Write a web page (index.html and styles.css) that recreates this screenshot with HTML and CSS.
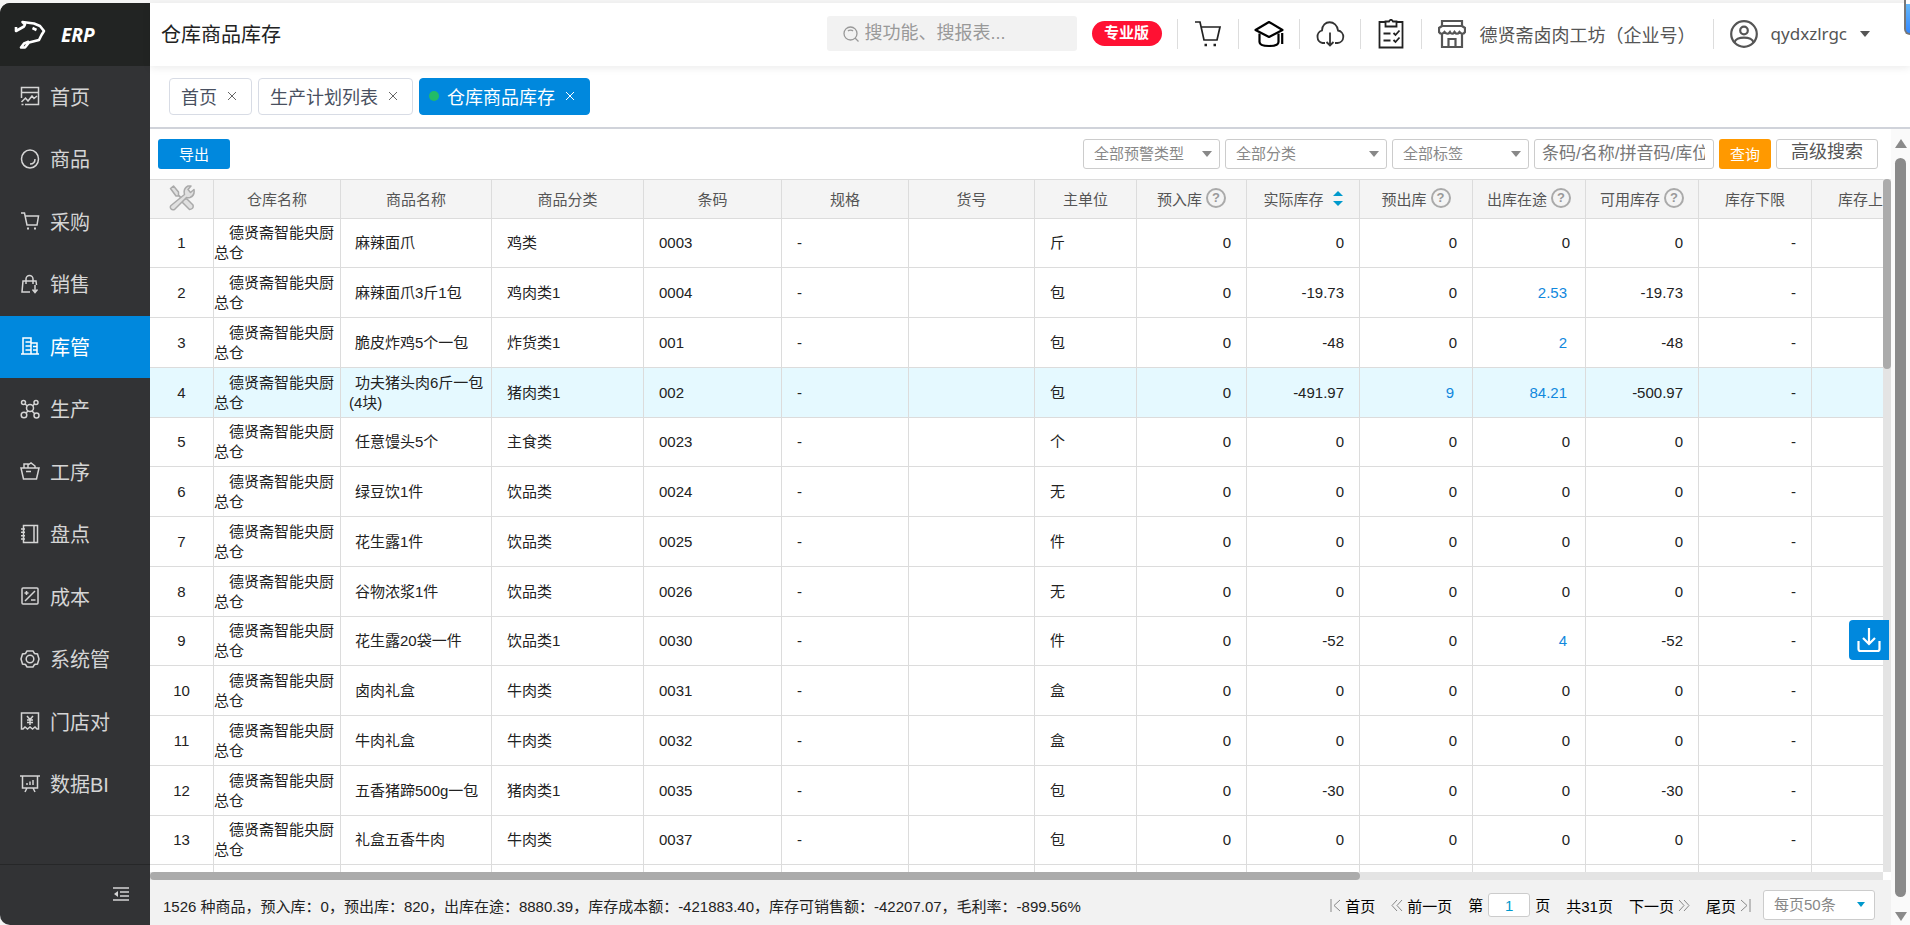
FILE: index.html
```
<!DOCTYPE html>
<html lang="zh-CN">
<head>
    <meta charset="UTF-8">
    <meta name="viewport" content="width=device-width, initial-scale=1.0">
    <title>仓库商品库存</title>
    <link rel="stylesheet" href="styles.css">
</head>
<body>
    <aside class="sidebar">
        <div class="logo">
            <svg width="32" height="32" viewBox="0 0 32 32" fill="none" stroke="#fff" stroke-width="2.600" stroke-linejoin="round"><path d="M2 8v4l8-4.500 1-2L8.500 3 20 4.500l6 2.500 4 5-2.500 4L25 21l-10 2.500-4 5H7l3-4 5-2M18.500 9l4 2" /></svg>
            <span>ERP</span>
        </div>
        <nav class="menu">
            <a href="#"><svg viewBox="0 0 20 20"><path d="M1.500 12V1.500h17v17H5M1.500 6.500h17M1.500 16l4-4 2.500 3 4-5 2 2.500 3-2.500M1.500 18.500h2" /></svg>首页</a>
            <a href="#"><svg viewBox="0 0 20 20"><ellipse cx="10" cy="10" rx="8.500" ry="9" /><path d="M15 10c0 3-2 5-5 5" /></svg>商品</a>
            <a href="#"><svg viewBox="0 0 20 20"><path d="M1 2h3.500l2.500 12h10l1.500-9H5.500" /><path d="M7 17.500h2M14 17.500h2" stroke-width="2" /></svg>采购</a>
            <a href="#"><svg viewBox="0 0 20 20"><path d="M10 18H2l1-11h13l.5 4M6 10V5a3.500 3.500 0 0 1 7 0v5M15 11v7M12.500 15.500l2.500 3 2.500-3" /></svg>销售</a>
            <a href="#" class="active"><svg viewBox="0 0 20 20"><path d="M1 18h18M3 18V2h8v16M11 7h6v11M5.500 6H11M5.500 10H11M5.500 14H11M13 10.500h4M13 14h4" /></svg>库管</a>
            <a href="#"><svg viewBox="0 0 20 20"><circle cx="3.500" cy="3.500" r="2" /><circle cx="16" cy="3.500" r="2" /><circle cx="10" cy="9" r="3.500" /><circle cx="4" cy="16" r="2.800" /><circle cx="16.500" cy="16.500" r="2.500" /><path d="M5 5l2.500 2M14.500 5l-2 2M8 12l-2 2M12 12l2.500 2.500" /></svg>生产</a>
            <a href="#"><svg viewBox="0 0 20 20"><path d="M1 7h18l-2.500 11h-13L1 7zM4 7V3h4v4M8 4l3-2 4 3v2M6 10.500h5" /></svg>工序</a>
            <a href="#"><svg viewBox="0 0 20 20"><path d="M3.500 1.500h14v17h-14zM14 1.500v17M1 5h4M1 8.300h4M1 11.700h4M1 15h4" /></svg>盘点</a>
            <a href="#"><svg viewBox="0 0 20 20"><rect x="2" y="2" width="16" height="16" rx="1" /><path d="M5 15L15 5M4.500 7h4M6.500 5v4M11 14h4.500" /></svg>成本</a>
            <a href="#"><svg viewBox="0 0 20 20"><path d="M7 2h6l1.500 2.500 3 .5 1.500 5-1.500 5-3 .5L13 18H7l-1.500-2.500-3-.5L1 10l1.500-5 3-.5z" /><circle cx="10" cy="10" r="3.800" /></svg>系统管</a>
            <a href="#"><svg viewBox="0 0 20 20"><path d="M3 18H1.500V2h17v16H17l-2-2-2.500 2-2.500-2-2.500 2L5 16zM7 5l3 3.500L13 5M10 8.500V14M7 9h6M7 11.500h6" /></svg>门店对</a>
            <a href="#"><svg viewBox="0 0 20 20"><path d="M0 2h20M2.500 2v12h15V2M7 14l-2 4M13 14l2 4M7 11V9M10 11V7.500M13 11V6" /></svg>数据BI</a>
        </nav>
        <button class="collapse" aria-label="收起菜单">
            <svg width="16" height="14" viewBox="0 0 16 14" stroke="#d5d5d5" stroke-width="1.500"><path d="M0 1h16M7 5h9M7 9h9M0 13h16" /><path d="M5 4v6L1 7z" fill="#d5d5d5" stroke="none" /></svg>
        </button>
    </aside>

    <main class="main">
        <header class="header">
            <h1>仓库商品库存</h1>
            <div class="search">
                <svg width="16" height="16" viewBox="0 0 16 16" fill="none" stroke="#999" stroke-width="1.300"><circle cx="7.500" cy="7.500" r="6.500" /><path d="M12 12l3.500 3.500M5 5c1-1.300 4-1.300 5 0" /></svg>
                <input type="text" placeholder="搜功能、搜报表..." aria-label="搜索">
            </div>
            <span class="badge">专业版</span>
            <a href="#" class="icon-link" aria-label="购物车"><svg width="28" height="28" viewBox="0 0 28 28" fill="none" stroke="#222" stroke-width="1.700"><path d="M1 2h5l4 18h13l3-13H7.500" /><path d="M10.500 25h2.500M19.500 25h2.500" stroke-width="2.500" /></svg></a>
            <a href="#" class="icon-link" aria-label="学院"><svg width="30" height="28" viewBox="0 0 30 28" fill="none" stroke="#000" stroke-width="2.200" stroke-linejoin="round"><path d="M1.500 10L15 2l13.500 8L15 17z" /><path d="M5.500 13.500V22q0 4 9.500 4t9.500-4v-8.500M28.200 13v11" /></svg></a>
            <a href="#" class="icon-link" aria-label="下载"><svg width="30" height="28" viewBox="0 0 30 28" fill="none" stroke="#333" stroke-width="1.800"><path d="M10 23H7.500a6.500 6.500 0 0 1-.5-12.500c0-11 15-11 16 0a6.300 6.300 0 0 1-.5 12.500H20M15 12.500v13M11.500 22l3.500 3.500 3.500-3.500" /></svg></a>
            <a href="#" class="icon-link" aria-label="任务"><svg width="26" height="30" viewBox="0 0 26 30" fill="none" stroke="#222" stroke-width="1.800"><path d="M7 3H1.500v25.500h23V3H19M7.500 2.500H11Q13-1 15 2.500h3.500v5h-11zM5.500 14.500h7M5.500 21.500h7M15.500 14l2 2 4-4.500M15.500 21l2 2 4-4.500" /></svg></a>
            <a href="#" class="company">
                <svg width="28" height="28" viewBox="0 0 28 28" fill="none" stroke="#555" stroke-width="2.200"><path d="M4 1h20v5H4zM4 6L1 8v4q2.500 3.500 5.500 0 3 3.500 5.500 0 2 3.500 4.500 0 2.500 3.500 5 0 3 3.500 5.500 0V8l-3-2M4 14v13h20V14M10.500 27v-8h7v8" /></svg>
                德贤斋卤肉工坊（企业号）
            </a>
            <a href="#" class="user">
                <svg width="28" height="28" viewBox="0 0 28 28" fill="none" stroke="#555" stroke-width="2.200"><circle cx="14" cy="14" r="12.800" /><circle cx="14" cy="10.500" r="3.800" /><path d="M4.500 22.500c1-6.500 18-6.500 19 0" /></svg>
                <span>qydxzlrgc</span>
                <i class="caret"></i>
            </a>
        </header>

        <div class="tabs">
            <div class="tab"><a href="#">首页</a><button aria-label="关闭"><svg viewBox="0 0 10 10"><path d="M1 1l8 8M9 1L1 9" /></svg></button></div>
            <div class="tab"><a href="#">生产计划列表</a><button aria-label="关闭"><svg viewBox="0 0 10 10"><path d="M1 1l8 8M9 1L1 9" /></svg></button></div>
            <div class="tab active"><i class="dot"></i><a href="#">仓库商品库存</a><button aria-label="关闭"><svg viewBox="0 0 10 10"><path d="M1 1l8 8M9 1L1 9" /></svg></button></div>
        </div>

        <div class="page">
            <section class="content">
                <div class="toolbar">
                    <button class="btn export">导出</button>
                    <div class="select"><select aria-label="预警类型"><option>全部预警类型</option></select></div>
                    <div class="select wide"><select aria-label="分类"><option>全部分类</option></select></div>
                    <div class="select"><select aria-label="标签"><option>全部标签</option></select></div>
                    <input type="text" class="keyword" placeholder="条码/名称/拼音码/库位" aria-label="关键字">
                    <button class="btn query">查询</button>
                    <button class="btn advanced">高级搜索</button>
                </div>

                <div class="grid">
                    <div class="table-wrap">
                        <table>
                            <colgroup>
                                <col class="c-no"><col class="c-store"><col class="c-name"><col class="c-cate"><col class="c-code"><col class="c-spec"><col class="c-item"><col class="c-unit"><col class="c-in"><col class="c-num"><col class="c-num"><col class="c-num"><col class="c-num"><col class="c-num"><col class="c-num">
                            </colgroup>
                            <thead>
                                <tr>
                                    <th><svg class="tools" width="26" height="26" viewBox="0 0 26 26" fill="#e0e0e0" stroke="#aaa" stroke-width="1.500" stroke-linejoin="round"><path d="M1.500 3.500l3-2.500 5 6v3l3 3 2.500 1h3l6 6q1 4-3.500 4.500l-7-7v-3L10 11H7z" /><path d="M15.500 9.500q-1.500-6 3.500-8.500h3l-3 3.500 2.500 3L25 4.500q1 6-4 8-2 .5-3.500 0l-12 12q-3 1-4-1.500-.5-1.500.5-2.500z" /></svg></th>
                                    <th>仓库名称</th>
                                    <th>商品名称</th>
                                    <th>商品分类</th>
                                    <th>条码</th>
                                    <th>规格</th>
                                    <th>货号</th>
                                    <th>主单位</th>
                                    <th><div class="th">预入库<i class="help">?</i></div></th>
                                    <th><div class="th">实际库存<i class="sort"></i></div></th>
                                    <th><div class="th">预出库<i class="help">?</i></div></th>
                                    <th><div class="th">出库在途<i class="help">?</i></div></th>
                                    <th><div class="th">可用库存<i class="help">?</i></div></th>
                                    <th>库存下限</th>
                                    <th>库存上限</th>
                                </tr>
                            </thead>
                            <tbody id="rows"></tbody>
                        </table>
                    </div>
                    <div class="vbar"><i></i></div>
                    <div class="hbar"><i></i></div>
                </div>

                <footer class="footer">
                    <p>1526 种商品，预入库：0，预出库：820，出库在途：8880.39，库存成本额：-421883.40，库存可销售额：-42207.07，毛利率：-899.56%</p>
                    <div class="pager">
                        <a href="#"><svg width="11" height="13" viewBox="0 0 11 13"><path d="M1 0v13M10 1L4 6.500l6 5.500" /></svg>首页</a>
                        <a href="#"><svg width="12" height="13" viewBox="0 0 12 13"><path d="M6 1L1 6.500 6 12M11 1L6 6.500l5 5.500" /></svg>前一页</a>
                        <label>第<input type="text" value="1">页</label>
                        <span>共31页</span>
                        <a href="#">下一页<svg width="12" height="13" viewBox="0 0 12 13"><path d="M1 1l5 5.500L1 12M6 1l5 5.500L6 12" /></svg></a>
                        <a href="#">尾页<svg width="11" height="13" viewBox="0 0 11 13"><path d="M10 0v13M1 1l6 5.500L1 12" /></svg></a>
                        <div class="select size"><select aria-label="每页条数"><option>每页50条</option></select></div>
                    </div>
                </footer>

                <button class="download" aria-label="下载"><svg width="24" height="26" viewBox="0 0 24 26" fill="none" stroke="#fff" stroke-width="2.200"><path d="M12 1v16M6 11l6 6 6-6M1.500 14v8q0 2 2 2h17q2 0 2-2v-8" /></svg></button>
            </section>
            <div class="scroll"><i class="up"></i><i class="thumb"></i><i class="down"></i></div>
        </div>
    </main>
    <div class="float-window"></div>

    <script>
        // 商品名称, 分类, 条码, 单位, 实际库存, 预出库, 出库在途, 可用库存
        var goods = [
            ['麻辣面爪', '鸡类', '0003', '斤', '0', '0', '0', '0'],
            ['麻辣面爪3斤1包', '鸡肉类1', '0004', '包', '-19.73', '0', '2.53', '-19.73'],
            ['脆皮炸鸡5个一包', '炸货类1', '001', '包', '-48', '0', '2', '-48'],
            ['功夫猪头肉6斤一包(4块)', '猪肉类1', '002', '包', '-491.97', '9', '84.21', '-500.97'],
            ['任意馒头5个', '主食类', '0023', '个', '0', '0', '0', '0'],
            ['绿豆饮1件', '饮品类', '0024', '无', '0', '0', '0', '0'],
            ['花生露1件', '饮品类', '0025', '件', '0', '0', '0', '0'],
            ['谷物浓浆1件', '饮品类', '0026', '无', '0', '0', '0', '0'],
            ['花生露20袋一件', '饮品类1', '0030', '件', '-52', '0', '4', '-52'],
            ['卤肉礼盒', '牛肉类', '0031', '盒', '0', '0', '0', '0'],
            ['牛肉礼盒', '牛肉类', '0032', '盒', '0', '0', '0', '0'],
            ['五香猪蹄500g一包', '猪肉类1', '0035', '包', '-30', '0', '0', '-30'],
            ['礼盒五香牛肉', '牛肉类', '0037', '包', '0', '0', '0', '0']
        ];

        function linkCell(value) {
            return value === '0' ? '0' : '<a href="#">' + value + '</a>';
        }

        var html = '';
        for (var i = 0; i < goods.length; i++) {
            var g = goods[i];
            html += '<tr' + (i === 3 ? ' class="selected"' : '') + '>' +
                '<td class="no">' + (i + 1) + '</td>' +
                '<td class="store">德贤斋智能央厨总仓</td>' +
                '<td class="name">' + g[0] + '</td>' +
                '<td>' + g[1] + '</td><td>' + g[2] + '</td><td>-</td><td></td><td>' + g[3] + '</td>' +
                '<td class="num">0</td>' +
                '<td class="num">' + g[4] + '</td>' +
                '<td class="num">' + linkCell(g[5]) + '</td>' +
                '<td class="num">' + linkCell(g[6]) + '</td>' +
                '<td class="num">' + g[7] + '</td>' +
                '<td class="num">-</td><td></td></tr>';
        }
        html += '<tr>' + '<td></td>'.repeat(15) + '</tr>';
        document.getElementById('rows').innerHTML = html;
    </script>
</body>
</html>
```
FILE: styles.css
```
* {
    box-sizing: border-box;
}

body {
    margin: 0;
    padding-top: 3px;
    height: 100vh;
    display: flex;
    overflow: hidden;
    background-color: #f5f5f5;
    font-family: "Liberation Sans", "Noto Sans CJK SC", sans-serif;
    font-size: 15px;
    color: #222;
}

a {
    color: inherit;
    text-decoration: none;
}

button,
input,
select {
    font-family: inherit;
    font-size: 15px;
    margin: 0;
}

button {
    border: none;
    padding: 0;
    background: none;
    cursor: pointer;
}

svg {
    flex: none;
}

/* sidebar */
.sidebar {
    width: 150px;
    flex: none;
    display: flex;
    flex-direction: column;
    background-color: #323335;
    border-radius: 10px 0 0 10px;
    overflow: hidden;
}

.logo {
    height: 63px;
    flex: none;
    display: flex;
    align-items: center;
    gap: 15px;
    padding-left: 14px;
    background-color: #222423;
    color: #fff;
    font-family: "Noto Sans", sans-serif;
    font-size: 19px;
    font-weight: bold;
    font-style: italic;
}

.menu {
    flex: 1;
}

.menu a {
    height: 62px;
    display: flex;
    align-items: center;
    gap: 10px;
    padding: 0 0 2px 20px;
    color: #d5d5d5;
    font-size: 20px;
}

.menu a:nth-child(even) {
    height: 63px;
}

.menu a.active {
    background-color: #0088dd;
    color: #fff;
}

.menu svg {
    width: 20px;
    height: 20px;
    fill: none;
    stroke: currentColor;
    stroke-width: 1.5;
}

.collapse {
    height: 61px;
    flex: none;
    border-top: 1px solid #262728;
    padding-right: 21px;
    text-align: right;
}

/* header */
.main {
    flex: 1;
    min-width: 0;
    display: flex;
    flex-direction: column;
    background-color: #fff;
}

.header {
    height: 63px;
    flex: none;
    display: flex;
    align-items: center;
    padding: 0 40px 2px 11px;
    box-shadow: 0 2px 8px rgba(0, 0, 0, 0.08);
    color: #555;
}

.header h1 {
    margin: 0 auto 0 0;
    font-size: 20px;
    font-weight: normal;
    color: #222;
}

.search {
    width: 250px;
    height: 35px;
    margin-right: 15px;
    display: flex;
    align-items: center;
    gap: 6px;
    padding-left: 16px;
    background-color: #f2f2f2;
    border-radius: 3px;
}

.search input {
    flex: 1;
    min-width: 0;
    border: none;
    padding: 0;
    background: none;
    font-size: 18px;
    outline: none;
}

::placeholder {
    color: #999;
}

.badge {
    width: 70px;
    height: 25px;
    line-height: 24px;
    margin-right: 15px;
    border-radius: 13px;
    background-color: #ff1133;
    color: #fff;
    font-weight: bold;
    text-align: center;
}

.icon-link,
.company,
.user {
    height: 30px;
    display: flex;
    align-items: center;
    border-left: 1px solid #ddd;
}

.icon-link {
    width: 61px;
    justify-content: center;
}

.company {
    width: 292px;
    padding-left: 16px;
    gap: 14px;
    font-size: 18px;
    white-space: nowrap;
}

.user {
    padding-left: 16px;
    gap: 13px;
    font-family: "Noto Sans", sans-serif;
    font-size: 17px;
}

.caret {
    border: 5px solid transparent;
    border-top: 6px solid #555;
    border-bottom: none;
}

/* tabs */
.tabs {
    height: 63px;
    flex: none;
    display: flex;
    gap: 6px;
    padding: 12px 19px;
    border-bottom: 2px solid #d0d3da;
}

.tab {
    height: 37px;
    display: flex;
    align-items: center;
    gap: 10px;
    padding: 0 14px 2px 11px;
    border: 1px solid #d8dce5;
    border-radius: 4px;
    font-size: 18px;
    color: #495060;
}

.tab button {
    display: flex;
}

.tab svg {
    width: 10px;
    height: 10px;
    stroke: #666;
}

.tab.active {
    background-color: #0088dd;
    border-color: #0088dd;
    color: #fff;
    padding-left: 9px;
}

.tab.active svg {
    stroke: #fff;
}

.dot {
    width: 10px;
    height: 10px;
    margin-right: -2px;
    border-radius: 50%;
    background-color: #22bb66;
}

/* page */
.page {
    flex: 1;
    min-height: 0;
    display: flex;
}

.content {
    position: relative;
    flex: 1;
    min-width: 0;
    display: flex;
    flex-direction: column;
}

.toolbar {
    height: 50px;
    flex: none;
    display: flex;
    gap: 5px;
    padding: 10px 13px 10px 8px;
}

.btn {
    height: 30px;
    border-radius: 3px;
    padding-bottom: 2px;
    color: #fff;
}

.export {
    width: 72px;
    margin-right: auto;
    background-color: #0088dd;
}

.query {
    width: 52px;
    background-color: #ff9900;
}

.advanced {
    width: 102px;
    border: 1px solid #ccc;
    padding-bottom: 4px;
    font-size: 18px;
    line-height: 24px;
    color: #555;
}

.select {
    position: relative;
    width: 137px;
    height: 30px;
}

.select.wide {
    width: 162px;
}

.select select {
    width: 100%;
    height: 100%;
    appearance: none;
    border: 1px solid #ccc;
    border-radius: 3px;
    padding: 0 10px 2px;
    background-color: #fff;
    color: #888;
}

.select::after {
    content: "";
    position: absolute;
    right: 8px;
    top: 12px;
    border: 5px solid transparent;
    border-top: 6px solid #888;
    border-bottom: none;
}

.keyword {
    width: 180px;
    height: 30px;
    border: 1px solid #ccc;
    border-radius: 3px;
    padding: 0 8px 0 7px;
    font-size: 17px;
}

.keyword::placeholder {
    color: #777;
}

/* table */
.grid {
    flex: 1;
    min-height: 0;
    display: grid;
    grid-template-columns: minmax(0, 1fr) 8px;
    grid-template-rows: minmax(0, 1fr) 8px;
}

.table-wrap {
    overflow: hidden;
}

table {
    width: 1775px;
    table-layout: fixed;
    border-collapse: separate;
    border-spacing: 0;
}

.c-no { width: 64px; }
.c-store { width: 127px; }
.c-name { width: 151px; }
.c-cate { width: 152px; }
.c-code { width: 138px; }
.c-spec { width: 127px; }
.c-item { width: 126px; }
.c-unit { width: 102px; }
.c-in { width: 110px; }
.c-num { width: 113px; }

th {
    height: 40px;
    padding: 0 0 2px;
    border: 1px solid #dcdcdc;
    border-left: none;
    background-color: #f4f4f4;
    color: #555;
    font-weight: normal;
}

.tools {
    display: block;
    margin: 0 auto;
}

.th {
    display: flex;
    align-items: center;
    justify-content: center;
    gap: 4px;
}

.help {
    width: 20px;
    height: 20px;
    border: 2px solid #aaa;
    border-radius: 50%;
    color: #999;
    font-size: 13px;
    font-weight: bold;
    font-style: normal;
    line-height: 16px;
}

.sort {
    margin-left: 5px;
}

.sort::before,
.sort::after {
    content: "";
    display: block;
    border: 5px solid transparent;
}

.sort::before {
    border-top: none;
    border-bottom-color: #0099cc;
    margin-bottom: 5px;
}

.sort::after {
    border-bottom: none;
    border-top-color: #0099cc;
}

td {
    height: 50px;
    padding: 0 15px;
    border-right: 1px solid #dcdcdc;
    border-bottom: 1px solid #dcdcdc;
    line-height: 20px;
}

tr:nth-child(4n+1) td {
    height: 49px;
}

.selected td {
    background-color: #e5f9ff;
}

.no {
    padding: 0;
    text-align: center;
}

.store {
    padding: 0;
    text-indent: 15px;
}

.name {
    padding: 0 0 0 8px;
    text-indent: 6px;
}

.num {
    text-align: right;
}

.num a {
    padding-right: 3px;
    color: #1188dd;
}

.vbar,
.hbar {
    background-color: #e4e4e4;
}

.vbar i,
.hbar i {
    display: block;
    border-radius: 4px;
    background-color: #ababab;
}

.vbar i {
    height: 27.4%;
}

.hbar i {
    width: 69.8%;
    height: 8px;
}

/* footer */
.footer {
    height: 45px;
    flex: none;
    display: flex;
    align-items: center;
    justify-content: space-between;
    padding: 5px 16px 0 13px;
    background-color: #f2f2f2;
    white-space: nowrap;
}

.footer p {
    margin: 0;
}

.pager {
    display: flex;
    align-items: center;
    gap: 16px;
    color: #000;
}

.pager a {
    display: flex;
    align-items: center;
    gap: 4px;
}

.pager a svg {
    fill: none;
    stroke: #888;
}

.pager input {
    width: 42px;
    height: 24px;
    margin: 0 5px;
    border: 1px solid #ccc;
    border-radius: 3px;
    padding: 0;
    text-align: center;
    color: #0099cc;
}

.select.size {
    width: 112px;
    margin-left: -4px;
}

.select.size::after {
    border-width: 5px 4px 0;
    border-top-color: #0099cc;
    right: 10px;
}

.download {
    position: absolute;
    right: 2px;
    bottom: 265px;
    width: 40px;
    height: 40px;
    display: flex;
    align-items: center;
    justify-content: center;
    border-radius: 4px 0 0 4px;
    background-color: #0088dd;
}

/* page scrollbar */
.scroll {
    width: 19px;
    flex: none;
    display: flex;
    flex-direction: column;
    align-items: center;
    gap: 10px;
    padding: 10px 0 4px;
    background-color: #fafafa;
}

.up,
.down {
    border: 6px solid transparent;
}

.up {
    border-top: none;
    border-bottom: 9px solid #8a8a8a;
}

.down {
    margin-top: 5px;
    border-bottom: none;
    border-top: 9px solid #8a8a8a;
}

.thumb {
    flex: 1;
    width: 11px;
    border-radius: 6px;
    background-color: #8a8a8a;
}

/* floating window peeking in from the right edge */
.float-window {
    position: absolute;
    top: 0;
    right: 0;
    width: 6px;
    height: 35px;
    border-left: 2px solid #777;
    border-bottom: 2px solid #777;
    border-radius: 0 0 0 6px;
    background: linear-gradient(#fff 4px, #66b8f8 4px, #3388ff);
}
```
